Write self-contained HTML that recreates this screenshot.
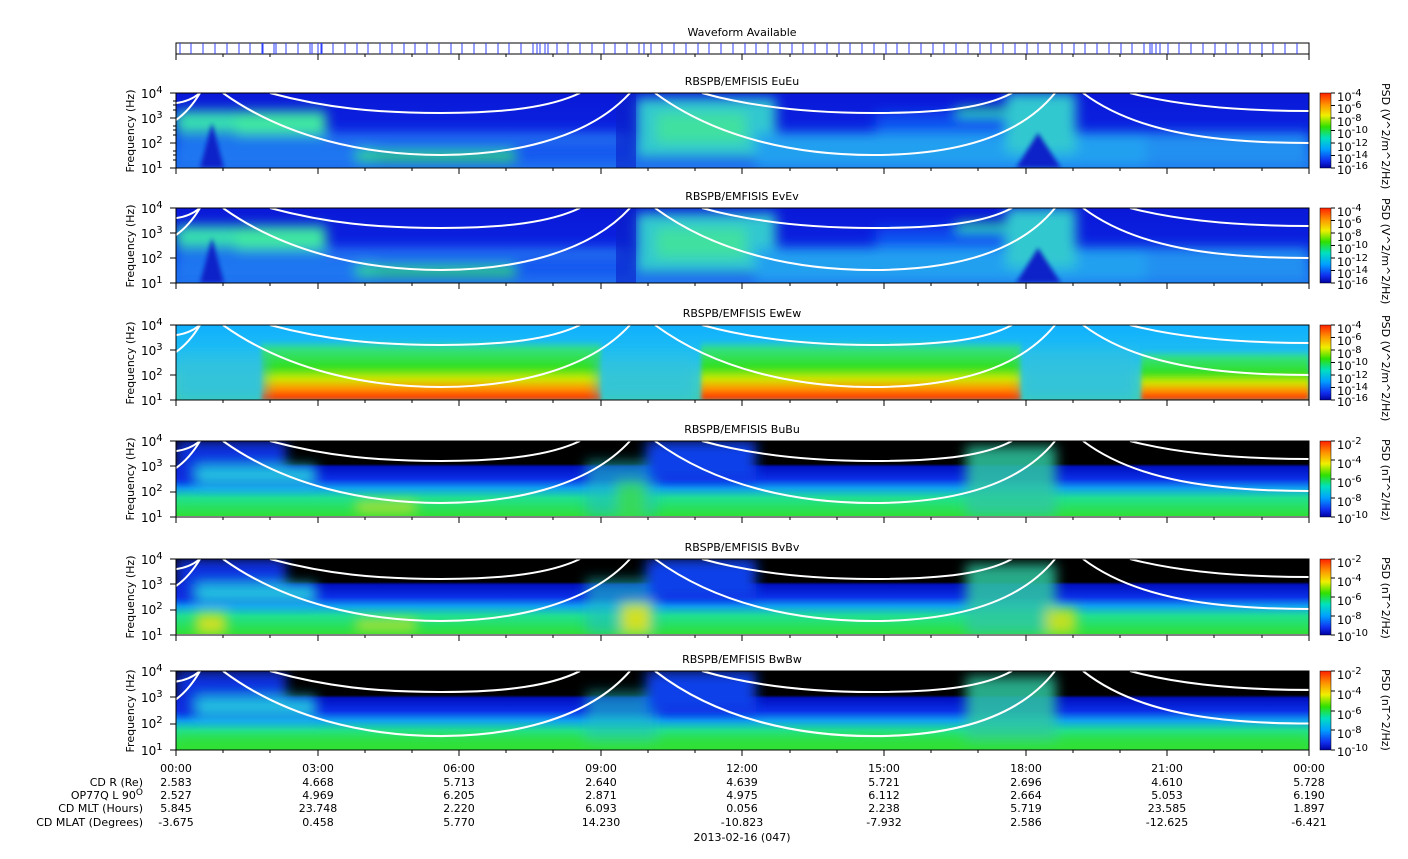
<!DOCTYPE html>
<html><head><meta charset="utf-8"><style>
html,body{margin:0;padding:0;background:#fff;}
svg{display:block;font-family:"DejaVu Sans","Liberation Sans",sans-serif;}
</style></head><body>
<svg width="1408" height="859" viewBox="0 0 1408 859" xmlns="http://www.w3.org/2000/svg">
<defs>
<filter id="b" x="-20%" y="-20%" width="140%" height="140%"><feGaussianBlur stdDeviation="6"/></filter>
<filter id="b2" x="-20%" y="-20%" width="140%" height="140%"><feGaussianBlur stdDeviation="2"/></filter>
<clipPath id="pc"><rect x="0" y="0" width="1133" height="75"/></clipPath>
<linearGradient id="cb" x1="0" y1="0" x2="0" y2="1">
<stop offset="0" stop-color="#ff2000"/><stop offset="0.15" stop-color="#ff9000"/><stop offset="0.3" stop-color="#f0f000"/>
<stop offset="0.45" stop-color="#30e000"/><stop offset="0.6" stop-color="#00e0c0"/><stop offset="0.75" stop-color="#00a0ff"/>
<stop offset="0.9" stop-color="#1030f0"/><stop offset="1" stop-color="#0000a0"/></linearGradient>
<linearGradient id="gE" x1="0" y1="0" x2="0" y2="1">
<stop offset="0" stop-color="#0a18d8"/><stop offset="0.5" stop-color="#0a22e0"/><stop offset="0.75" stop-color="#1050f0"/><stop offset="1" stop-color="#2070f0"/></linearGradient>
<linearGradient id="gW" x1="0" y1="0" x2="0" y2="1">
<stop offset="0" stop-color="#10b0ff"/><stop offset="0.45" stop-color="#20c0f0"/><stop offset="0.7" stop-color="#40d0c0"/><stop offset="1" stop-color="#40d0b0"/></linearGradient>
<linearGradient id="gHot" x1="0" y1="0" x2="0" y2="1">
<stop offset="0" stop-color="#30d8a0" stop-opacity="0"/><stop offset="0.15" stop-color="#30e080"/><stop offset="0.45" stop-color="#30e020"/><stop offset="0.65" stop-color="#d0e800"/><stop offset="0.82" stop-color="#ff9000"/><stop offset="1" stop-color="#ff2000"/></linearGradient>
<linearGradient id="gB" x1="0" y1="0" x2="0" y2="1">
<stop offset="0" stop-color="#000"/><stop offset="0.3" stop-color="#000"/><stop offset="0.34" stop-color="#0010c0"/><stop offset="0.5" stop-color="#0a30e8"/><stop offset="0.62" stop-color="#10a0f0"/><stop offset="0.75" stop-color="#20e090"/><stop offset="1" stop-color="#30e030"/></linearGradient>
<g id="curves" fill="none" stroke="#fff" stroke-width="2">
<path d="M-60,8 C-30,5 0,20 24,0"/>
<path d="M0,27 C10,20 18,10 24,0"/>
<path d="M47,0 C110,45 190,62 265,62 C330,62 410,48 454,0"/>
<path d="M94,0 C150,15 200,20 265,20 C330,20 375,14 404,0"/>
<path d="M479,0 C540,45 620,62 697,62 C770,62 840,48 879,0"/>
<path d="M526,0 C580,15 640,20 697,20 C770,20 810,14 836,0"/>
<path d="M907,0 C960,40 1040,50 1133,50"/>
<path d="M954,0 C1000,12 1060,18 1133,18"/>
</g>
</defs>

<!-- Waveform bar -->
<text x="742" y="36" font-size="11" text-anchor="middle">Waveform Available</text>
<rect x="176" y="43" width="1133" height="11" fill="#fff" stroke="#000"/>
<g stroke="#3040ff" stroke-width="1">
<path d="M180,43v11M191,43v11M203,43v11M215,43v11M227,43v11M239,43v11M250,43v11M262,43v11M263,43v11M274,43v11M276,43v11M286,43v11M298,43v11M310,43v11M312,43v11M318,43v11M321,43v11M322,43v11M333,43v11M345,43v11M357,43v11M368,43v11M380,43v11M392,43v11M404,43v11M415,43v11M427,43v11M439,43v11M451,43v11M462,43v11M474,43v11M486,43v11M498,43v11M509,43v11M521,43v11M533,43v11M537,43v11M540,43v11M545,43v11M548,43v11M557,43v11M568,43v11M580,43v11M592,43v11M604,43v11M615,43v11M627,43v11M639,43v11M644,43v11M651,43v11M662,43v11M674,43v11M686,43v11M698,43v11M709,43v11M721,43v11M733,43v11M745,43v11M756,43v11M768,43v11M780,43v11M792,43v11M803,43v11M815,43v11M827,43v11M839,43v11M850,43v11M862,43v11M874,43v11M886,43v11M897,43v11M909,43v11M921,43v11M933,43v11M944,43v11M956,43v11M968,43v11M980,43v11M991,43v11M1003,43v11M1015,43v11M1027,43v11M1038,43v11M1050,43v11M1062,43v11M1074,43v11M1085,43v11M1097,43v11M1109,43v11M1121,43v11M1132,43v11M1144,43v11M1150,43v11M1152,43v11M1156,43v11M1160,43v11M1168,43v11M1179,43v11M1191,43v11M1203,43v11M1215,43v11M1226,43v11M1238,43v11M1250,43v11M1262,43v11M1273,43v11M1285,43v11M1297,43v11"/>
</g>
<g stroke="#000"><path d="M176,54v6M223,54v3M270,54v3M318,54v6M365,54v3M412,54v3M459,54v6M506,54v3M553,54v3M601,54v6M648,54v3M695,54v3M742,54v6M790,54v3M837,54v3M884,54v6M931,54v3M978,54v3M1026,54v6M1073,54v3M1120,54v3M1167,54v6M1214,54v3M1262,54v3M1309,54v6"/></g>

<!-- Panel 1 & 2: E fields -->
<g transform="translate(176,93)">
<g clip-path="url(#pc)">
<rect width="1133" height="75" fill="url(#gE)"/>
<g filter="url(#b)">
<rect x="0" y="18" width="150" height="22" fill="#38e0b0"/>
<rect x="60" y="20" width="90" height="22" fill="#40e8a0"/>
<rect x="0" y="42" width="200" height="30" fill="#2080f0" opacity="0.8"/>
<rect x="180" y="58" width="160" height="10" fill="#30e070"/>
<rect x="150" y="40" width="300" height="14" fill="#2070f0"/>
<rect x="460" y="5" width="140" height="60" fill="#30c8d0"/>
<rect x="480" y="20" width="90" height="30" fill="#40e0a0"/>
<rect x="580" y="40" width="553" height="35" fill="#20a0f0"/>
<rect x="700" y="20" width="150" height="20" fill="#1050f0"/>
<rect x="780" y="15" width="60" height="8" fill="#30e090"/>
<rect x="830" y="0" width="70" height="60" fill="#30c8d0"/>
<rect x="970" y="40" width="163" height="35" fill="#2090f0"/>
</g>
<path d="M24,75 L36,30 L48,75Z" fill="#0a20c8" filter="url(#b2)"/>
<path d="M440,0 h20 v75 h-20z" fill="#0a20c8" opacity="0.6"/>
<path d="M862,40 L885,75 L840,75Z" fill="#0a20c8" filter="url(#b2)"/>
<use href="#curves"/>
</g>
<rect width="1133" height="75" fill="none" stroke="#000"/>
</g>
<g transform="translate(176,208)">
<g clip-path="url(#pc)">
<rect width="1133" height="75" fill="url(#gE)"/>
<g filter="url(#b)">
<rect x="0" y="18" width="150" height="22" fill="#38e0b0"/>
<rect x="60" y="20" width="90" height="22" fill="#40e8a0"/>
<rect x="0" y="42" width="200" height="30" fill="#2080f0" opacity="0.8"/>
<rect x="180" y="58" width="160" height="10" fill="#30e070"/>
<rect x="150" y="40" width="300" height="14" fill="#2070f0"/>
<rect x="460" y="5" width="140" height="60" fill="#30c8d0"/>
<rect x="480" y="20" width="90" height="30" fill="#40e0a0"/>
<rect x="580" y="40" width="553" height="35" fill="#20a0f0"/>
<rect x="700" y="20" width="150" height="20" fill="#1050f0"/>
<rect x="780" y="15" width="60" height="8" fill="#30e090"/>
<rect x="830" y="0" width="70" height="60" fill="#30c8d0"/>
<rect x="970" y="40" width="163" height="35" fill="#2090f0"/>
</g>
<path d="M24,75 L36,30 L48,75Z" fill="#0a20c8" filter="url(#b2)"/>
<path d="M440,0 h20 v75 h-20z" fill="#0a20c8" opacity="0.6"/>
<path d="M862,40 L885,75 L840,75Z" fill="#0a20c8" filter="url(#b2)"/>
<use href="#curves"/>
</g>
<rect width="1133" height="75" fill="none" stroke="#000"/>
</g>
<!-- Panel 3 -->
<g transform="translate(176,325)">
<g clip-path="url(#pc)">
<rect width="1133" height="75" fill="url(#gW)"/>
<g filter="url(#b2)">
<rect x="85" y="15" width="340" height="60" fill="url(#gHot)"/>
<rect x="525" y="15" width="320" height="60" fill="url(#gHot)"/>
<rect x="965" y="25" width="168" height="50" fill="url(#gHot)"/>
</g>
<g filter="url(#b)">
<rect x="0" y="30" width="90" height="45" fill="#30c0e0" opacity="0.8"/>
<rect x="420" y="30" width="100" height="45" fill="#30c0e0" opacity="0.7"/>
<rect x="845" y="25" width="115" height="50" fill="#30c0e0" opacity="0.8"/>
</g>
<use href="#curves"/>
</g>
<rect width="1133" height="75" fill="none" stroke="#000"/>
</g>
<!-- Panel 4-6 B fields -->
<g transform="translate(176,441)">
<g clip-path="url(#pc)">
<rect width="1133" height="76" fill="url(#gB)"/>
<g filter="url(#b)">
<rect x="0" y="0" width="110" height="40" fill="#1030e0"/>
<rect x="20" y="25" width="120" height="20" fill="#20c0e0"/>
<rect x="410" y="20" width="70" height="56" fill="#20c0c0" opacity="0.6"/>
<rect x="440" y="40" width="30" height="36" fill="#40e040" opacity="0.7"/>
<rect x="470" y="0" width="110" height="40" fill="#1040e8"/>
<rect x="790" y="5" width="90" height="70" fill="#30c8a0" opacity="0.85"/>
<rect x="180" y="62" width="60" height="8" fill="#e0e020"/>
</g>
<use href="#curves"/>
</g>
<rect width="1133" height="76" fill="none" stroke="#000"/>
</g>
<g transform="translate(176,559)">
<g clip-path="url(#pc)">
<rect width="1133" height="76" fill="url(#gB)"/>
<g filter="url(#b)">
<rect x="0" y="0" width="110" height="40" fill="#1030e0"/>
<rect x="20" y="25" width="120" height="20" fill="#20c0e0"/>
<rect x="20" y="55" width="30" height="20" fill="#d0e020"/>
<rect x="410" y="20" width="70" height="56" fill="#20c0c0" opacity="0.6"/>
<rect x="445" y="45" width="30" height="30" fill="#d0e020"/>
<rect x="470" y="0" width="110" height="40" fill="#1040e8"/>
<rect x="790" y="5" width="90" height="70" fill="#30c8a0" opacity="0.85"/>
<rect x="870" y="50" width="30" height="25" fill="#c0e020"/>
<rect x="180" y="62" width="60" height="8" fill="#e0e020"/>
</g>
<use href="#curves"/>
</g>
<rect width="1133" height="76" fill="none" stroke="#000"/>
</g>
<g transform="translate(176,671)">
<g transform="scale(1,1.05)">
<g clip-path="url(#pc)">
<rect width="1133" height="76" fill="url(#gB)"/>
<g filter="url(#b)">
<rect x="0" y="0" width="110" height="40" fill="#1030e0"/>
<rect x="20" y="25" width="120" height="20" fill="#20c0e0"/>
<rect x="410" y="20" width="70" height="56" fill="#20c0c0" opacity="0.6"/>
<rect x="470" y="0" width="110" height="40" fill="#1040e8"/>
<rect x="790" y="5" width="90" height="70" fill="#30c8a0" opacity="0.85"/>
<rect x="0" y="64" width="1133" height="12" fill="#30e030"/>
</g>
<use href="#curves"/>
</g>
</g>
<rect width="1133" height="79" fill="none" stroke="#000"/>
</g>

<!-- Titles -->
<g font-size="11" text-anchor="middle">
<text x="742" y="85">RBSPB/EMFISIS  EuEu</text>
<text x="742" y="200">RBSPB/EMFISIS  EvEv</text>
<text x="742" y="317">RBSPB/EMFISIS  EwEw</text>
<text x="742" y="433">RBSPB/EMFISIS  BuBu</text>
<text x="742" y="551">RBSPB/EMFISIS  BvBv</text>
<text x="742" y="663">RBSPB/EMFISIS  BwBw</text>
</g>

<!-- Y axes -->
<g font-size="12">
<g transform="translate(0,93)">
<text transform="translate(134,38) rotate(-90)" text-anchor="middle" font-size="11">Frequency (Hz)</text>
<text x="141" y="80">10<tspan dy="-5" font-size="10">1</tspan></text>
<text x="141" y="55">10<tspan dy="-5" font-size="10">2</tspan></text>
<text x="141" y="30">10<tspan dy="-5" font-size="10">3</tspan></text>
<text x="141" y="5">10<tspan dy="-5" font-size="10">4</tspan></text>
<path d="M170,0h6M170,25h6M170,50h6M170,75h6M173,8h3M173,12h3M173,17h3M173,33h3M173,37h3M173,42h3M173,58h3M173,62h3M173,67h3" stroke="#000"/>
</g>
<g transform="translate(0,208)">
<text transform="translate(134,38) rotate(-90)" text-anchor="middle" font-size="11">Frequency (Hz)</text>
<text x="141" y="80">10<tspan dy="-5" font-size="10">1</tspan></text>
<text x="141" y="55">10<tspan dy="-5" font-size="10">2</tspan></text>
<text x="141" y="30">10<tspan dy="-5" font-size="10">3</tspan></text>
<text x="141" y="5">10<tspan dy="-5" font-size="10">4</tspan></text>
<path d="M170,0h6M170,25h6M170,50h6M170,75h6" stroke="#000"/>
</g>
<g transform="translate(0,325)">
<text transform="translate(134,38) rotate(-90)" text-anchor="middle" font-size="11">Frequency (Hz)</text>
<text x="141" y="80">10<tspan dy="-5" font-size="10">1</tspan></text>
<text x="141" y="55">10<tspan dy="-5" font-size="10">2</tspan></text>
<text x="141" y="30">10<tspan dy="-5" font-size="10">3</tspan></text>
<text x="141" y="5">10<tspan dy="-5" font-size="10">4</tspan></text>
<path d="M170,0h6M170,25h6M170,50h6M170,75h6" stroke="#000"/>
</g>
<g transform="translate(0,441)">
<text transform="translate(134,38) rotate(-90)" text-anchor="middle" font-size="11">Frequency (Hz)</text>
<text x="141" y="81">10<tspan dy="-5" font-size="10">1</tspan></text>
<text x="141" y="55">10<tspan dy="-5" font-size="10">2</tspan></text>
<text x="141" y="30">10<tspan dy="-5" font-size="10">3</tspan></text>
<text x="141" y="5">10<tspan dy="-5" font-size="10">4</tspan></text>
<path d="M170,0h6M170,25h6M170,51h6M170,76h6" stroke="#000"/>
</g>
<g transform="translate(0,559)">
<text transform="translate(134,38) rotate(-90)" text-anchor="middle" font-size="11">Frequency (Hz)</text>
<text x="141" y="81">10<tspan dy="-5" font-size="10">1</tspan></text>
<text x="141" y="55">10<tspan dy="-5" font-size="10">2</tspan></text>
<text x="141" y="30">10<tspan dy="-5" font-size="10">3</tspan></text>
<text x="141" y="5">10<tspan dy="-5" font-size="10">4</tspan></text>
<path d="M170,0h6M170,25h6M170,51h6M170,76h6" stroke="#000"/>
</g>
<g transform="translate(0,671)">
<text transform="translate(134,40) rotate(-90)" text-anchor="middle" font-size="11">Frequency (Hz)</text>
<text x="141" y="84">10<tspan dy="-5" font-size="10">1</tspan></text>
<text x="141" y="57">10<tspan dy="-5" font-size="10">2</tspan></text>
<text x="141" y="31">10<tspan dy="-5" font-size="10">3</tspan></text>
<text x="141" y="5">10<tspan dy="-5" font-size="10">4</tspan></text>
<path d="M170,0h6M170,26h6M170,53h6M170,79h6" stroke="#000"/>
</g>
</g>

<!-- X ticks below panels -->
<g stroke="#000">
<path id="xt" d="M176,168v6M223,168v3M270,168v3M318,168v6M365,168v3M412,168v3M459,168v6M506,168v3M553,168v3M601,168v6M648,168v3M695,168v3M742,168v6M790,168v3M837,168v3M884,168v6M931,168v3M978,168v3M1026,168v6M1073,168v3M1120,168v3M1167,168v6M1214,168v3M1262,168v3M1309,168v6"/>
<use href="#xt" y="115"/><use href="#xt" y="232"/><use href="#xt" y="349"/><use href="#xt" y="467"/><use href="#xt" y="582"/>
</g>

<!-- Colorbars -->
<g font-size="11.5">
<g transform="translate(1320,93)">
<rect width="11" height="75" fill="url(#cb)" stroke="#000" stroke-width="0.5"/>
<path d="M11,0h4M11,12.5h4M11,25h4M11,37.5h4M11,50h4M11,62.5h4M11,75h4" stroke="#000"/>
<text x="17" y="8">10<tspan dy="-5" font-size="10">-4</tspan></text>
<text x="17" y="20">10<tspan dy="-5" font-size="10">-6</tspan></text>
<text x="17" y="33">10<tspan dy="-5" font-size="10">-8</tspan></text>
<text x="17" y="45">10<tspan dy="-5" font-size="10">-10</tspan></text>
<text x="17" y="58">10<tspan dy="-5" font-size="10">-12</tspan></text>
<text x="17" y="70">10<tspan dy="-5" font-size="10">-14</tspan></text>
<text x="17" y="81">10<tspan dy="-5" font-size="10">-16</tspan></text>
<text transform="translate(62,-10) rotate(90)" font-size="11">PSD (V^2/m^2/Hz)</text>
</g>
<g transform="translate(1320,208)">
<rect width="11" height="75" fill="url(#cb)" stroke="#000" stroke-width="0.5"/>
<path d="M11,0h4M11,12.5h4M11,25h4M11,37.5h4M11,50h4M11,62.5h4M11,75h4" stroke="#000"/>
<text x="17" y="8">10<tspan dy="-5" font-size="10">-4</tspan></text>
<text x="17" y="20">10<tspan dy="-5" font-size="10">-6</tspan></text>
<text x="17" y="33">10<tspan dy="-5" font-size="10">-8</tspan></text>
<text x="17" y="45">10<tspan dy="-5" font-size="10">-10</tspan></text>
<text x="17" y="58">10<tspan dy="-5" font-size="10">-12</tspan></text>
<text x="17" y="70">10<tspan dy="-5" font-size="10">-14</tspan></text>
<text x="17" y="81">10<tspan dy="-5" font-size="10">-16</tspan></text>
<text transform="translate(62,-10) rotate(90)" font-size="11">PSD (V^2/m^2/Hz)</text>
</g>
<g transform="translate(1320,325)">
<rect width="11" height="75" fill="url(#cb)" stroke="#000" stroke-width="0.5"/>
<path d="M11,0h4M11,12.5h4M11,25h4M11,37.5h4M11,50h4M11,62.5h4M11,75h4" stroke="#000"/>
<text x="17" y="8">10<tspan dy="-5" font-size="10">-4</tspan></text>
<text x="17" y="20">10<tspan dy="-5" font-size="10">-6</tspan></text>
<text x="17" y="33">10<tspan dy="-5" font-size="10">-8</tspan></text>
<text x="17" y="45">10<tspan dy="-5" font-size="10">-10</tspan></text>
<text x="17" y="58">10<tspan dy="-5" font-size="10">-12</tspan></text>
<text x="17" y="70">10<tspan dy="-5" font-size="10">-14</tspan></text>
<text x="17" y="81">10<tspan dy="-5" font-size="10">-16</tspan></text>
<text transform="translate(62,-10) rotate(90)" font-size="11">PSD (V^2/m^2/Hz)</text>
</g>
<g transform="translate(1320,441)">
<rect width="11" height="76" fill="url(#cb)" stroke="#000" stroke-width="0.5"/>
<path d="M11,0h4M11,19h4M11,38h4M11,57h4M11,76h4" stroke="#000"/>
<text x="17" y="8">10<tspan dy="-5" font-size="10">-2</tspan></text>
<text x="17" y="27">10<tspan dy="-5" font-size="10">-4</tspan></text>
<text x="17" y="46">10<tspan dy="-5" font-size="10">-6</tspan></text>
<text x="17" y="65">10<tspan dy="-5" font-size="10">-8</tspan></text>
<text x="17" y="82">10<tspan dy="-5" font-size="10">-10</tspan></text>
<text transform="translate(62,-2) rotate(90)" font-size="11">PSD (nT^2/Hz)</text>
</g>
<g transform="translate(1320,559)">
<rect width="11" height="76" fill="url(#cb)" stroke="#000" stroke-width="0.5"/>
<path d="M11,0h4M11,19h4M11,38h4M11,57h4M11,76h4" stroke="#000"/>
<text x="17" y="8">10<tspan dy="-5" font-size="10">-2</tspan></text>
<text x="17" y="27">10<tspan dy="-5" font-size="10">-4</tspan></text>
<text x="17" y="46">10<tspan dy="-5" font-size="10">-6</tspan></text>
<text x="17" y="65">10<tspan dy="-5" font-size="10">-8</tspan></text>
<text x="17" y="82">10<tspan dy="-5" font-size="10">-10</tspan></text>
<text transform="translate(62,-2) rotate(90)" font-size="11">PSD (nT^2/Hz)</text>
</g>
<g transform="translate(1320,671)">
<rect width="11" height="79" fill="url(#cb)" stroke="#000" stroke-width="0.5"/>
<path d="M11,0h4M11,20h4M11,40h4M11,59h4M11,79h4" stroke="#000"/>
<text x="17" y="8">10<tspan dy="-5" font-size="10">-2</tspan></text>
<text x="17" y="28">10<tspan dy="-5" font-size="10">-4</tspan></text>
<text x="17" y="48">10<tspan dy="-5" font-size="10">-6</tspan></text>
<text x="17" y="67">10<tspan dy="-5" font-size="10">-8</tspan></text>
<text x="17" y="85">10<tspan dy="-5" font-size="10">-10</tspan></text>
<text transform="translate(62,-2) rotate(90)" font-size="11">PSD (nT^2/Hz)</text>
</g>
</g>

<!-- Bottom labels -->
<g font-size="11" text-anchor="end">
<text x="143" y="786">CD R (Re)</text>
<text x="143" y="799">OP77Q L 90<tspan dy="-4" font-size="9">O</tspan></text>
<text x="143" y="812">CD MLT (Hours)</text>
<text x="143" y="826">CD MLAT (Degrees)</text>
</g>
<g font-size="11" text-anchor="middle">
<g transform="translate(176,0)"><text y="772">00:00</text><text y="786">2.583</text><text y="799">2.527</text><text y="812">5.845</text><text y="826">-3.675</text></g>
<g transform="translate(318,0)"><text y="772">03:00</text><text y="786">4.668</text><text y="799">4.969</text><text y="812">23.748</text><text y="826">0.458</text></g>
<g transform="translate(459,0)"><text y="772">06:00</text><text y="786">5.713</text><text y="799">6.205</text><text y="812">2.220</text><text y="826">5.770</text></g>
<g transform="translate(601,0)"><text y="772">09:00</text><text y="786">2.640</text><text y="799">2.871</text><text y="812">6.093</text><text y="826">14.230</text></g>
<g transform="translate(742,0)"><text y="772">12:00</text><text y="786">4.639</text><text y="799">4.975</text><text y="812">0.056</text><text y="826">-10.823</text></g>
<g transform="translate(884,0)"><text y="772">15:00</text><text y="786">5.721</text><text y="799">6.112</text><text y="812">2.238</text><text y="826">-7.932</text></g>
<g transform="translate(1026,0)"><text y="772">18:00</text><text y="786">2.696</text><text y="799">2.664</text><text y="812">5.719</text><text y="826">2.586</text></g>
<g transform="translate(1167,0)"><text y="772">21:00</text><text y="786">4.610</text><text y="799">5.053</text><text y="812">23.585</text><text y="826">-12.625</text></g>
<g transform="translate(1309,0)"><text y="772">00:00</text><text y="786">5.728</text><text y="799">6.190</text><text y="812">1.897</text><text y="826">-6.421</text></g>
<text x="742" y="841">2013-02-16 (047)</text>
</g>
</svg>
</body></html>
